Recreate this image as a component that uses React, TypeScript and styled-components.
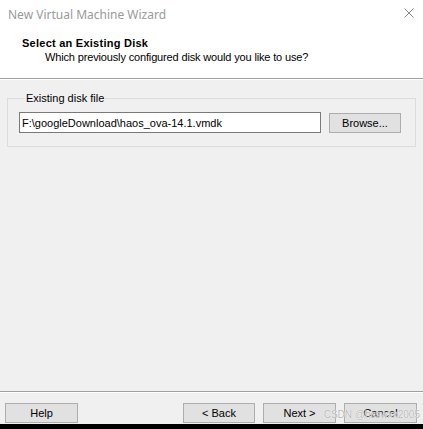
import React from 'react';
import styled, { createGlobalStyle } from 'styled-components';

const GlobalStyle = createGlobalStyle`
  html, body { margin: 0; padding: 0; }
  body {
    width: 423px;
    height: 429px;
    overflow: hidden;
    background: #000;
  }
`;

const Window = styled.div`
  position: relative;
  width: 423px;
  height: 424px;
  display: flex;
  flex-direction: column;
  background: #f0f0f0;
  font-family: "Liberation Sans", Arial, sans-serif;
  font-size: 11px;
  color: #000;
`;

const TitleBar = styled.div`
  height: 28px;
  background: #fff;
  display: flex;
  align-items: center;
  justify-content: space-between;
  padding: 0 9px 0 8px;
`;

const TitleText = styled.span`
  font-family: "Noto Sans", "Open Sans", sans-serif;
  font-size: 12px;
  color: #9a9a9a;
`;

const CloseIcon = styled.svg`
  width: 10px;
  height: 10px;
  margin-top: -2px;
`;

const Header = styled.div`
  background: #fff;
  padding: 8px 0 0 22px;
  height: 42px;
  border-bottom: 1px solid #a0a0a0;
`;

const HeaderTitle = styled.div`
  font-weight: bold;
  line-height: 14px;
  letter-spacing: 0.25px;
`;

const HeaderSub = styled.div`
  line-height: 14px;
  padding-left: 23px;
  letter-spacing: -0.15px;
`;

const Etched = styled.div`
  height: 1px;
  background: #fff;
`;

const Body = styled.div`
  flex: 1;
  padding: 12px 7px 0 7px;
`;

const Group = styled.fieldset`
  margin: 0;
  padding: 7px 13px 13px 11px;
  border: 1px solid #dcdcdc;
  display: flex;
  align-items: center;
  gap: 8px;
`;

const Legend = styled.legend`
  padding: 0 1px;
  margin-left: 6px;
  line-height: 13px;
`;

const PathInput = styled.input`
  box-sizing: border-box;
  width: 302px;
  height: 21px;
  border: 1px solid #7a7a7a;
  background: #fff;
  padding: 0 2px;
  font-family: "Liberation Sans", Arial, sans-serif;
  font-size: 11px;
  color: #000;
  outline: none;
`;

const Button = styled.button<{ $width?: number }>`
  box-sizing: border-box;
  width: ${p => p.$width ?? 73}px;
  height: 20px;
  border: 1px solid #adadad;
  background: #e1e1e1;
  font-family: "Liberation Sans", Arial, sans-serif;
  font-size: 11px;
  color: #000;
  padding: 0;
`;

const FooterLine = styled.div`
  border-top: 1px solid #a0a0a0;
  border-bottom: 1px solid #fff;
`;

const Footer = styled.div`
  display: flex;
  align-items: center;
  padding: 8px 6px 0 5px;
  height: 23px;
`;

const Spacer = styled.div`
  flex: 1;
`;

const ButtonGroup = styled.div`
  display: flex;
  gap: 8px;
`;

const Watermark = styled.span`
  position: absolute;
  right: 3px;
  bottom: 4px;
  font-family: "Liberation Sans", Arial, sans-serif;
  font-size: 10px;
  color: rgba(170, 170, 170, 0.85);
  text-shadow: 0 0 1px #fff, 0 0 1px #fff;
  pointer-events: none;
`;

export default function App() {
  return (
    <>
      <GlobalStyle />
      <Window>
        <TitleBar>
          <TitleText>New Virtual Machine Wizard</TitleText>
          <CloseIcon viewBox="0 0 10 10">
            <path d="M0.5 0.5 L9.5 9.5 M9.5 0.5 L0.5 9.5" stroke="#8a8a8a" strokeWidth="1" fill="none" />
          </CloseIcon>
        </TitleBar>
        <Header>
          <HeaderTitle>Select an Existing Disk</HeaderTitle>
          <HeaderSub>Which previously configured disk would you like to use?</HeaderSub>
        </Header>
        <Etched />
        <Body>
          <Group>
            <Legend>Existing disk file</Legend>
            <PathInput readOnly value="F:\googleDownload\haos_ova-14.1.vmdk" />
            <Button $width={72}>Browse...</Button>
          </Group>
        </Body>
        <FooterLine />
        <Footer>
          <Button>Help</Button>
          <Spacer />
          <ButtonGroup>
            <Button $width={72}>&lt; Back</Button>
            <Button>Next &gt;</Button>
            <Button>Cancel</Button>
          </ButtonGroup>
        </Footer>
        <Watermark>CSDN @hsswxx2005</Watermark>
      </Window>
    </>
  );
}
